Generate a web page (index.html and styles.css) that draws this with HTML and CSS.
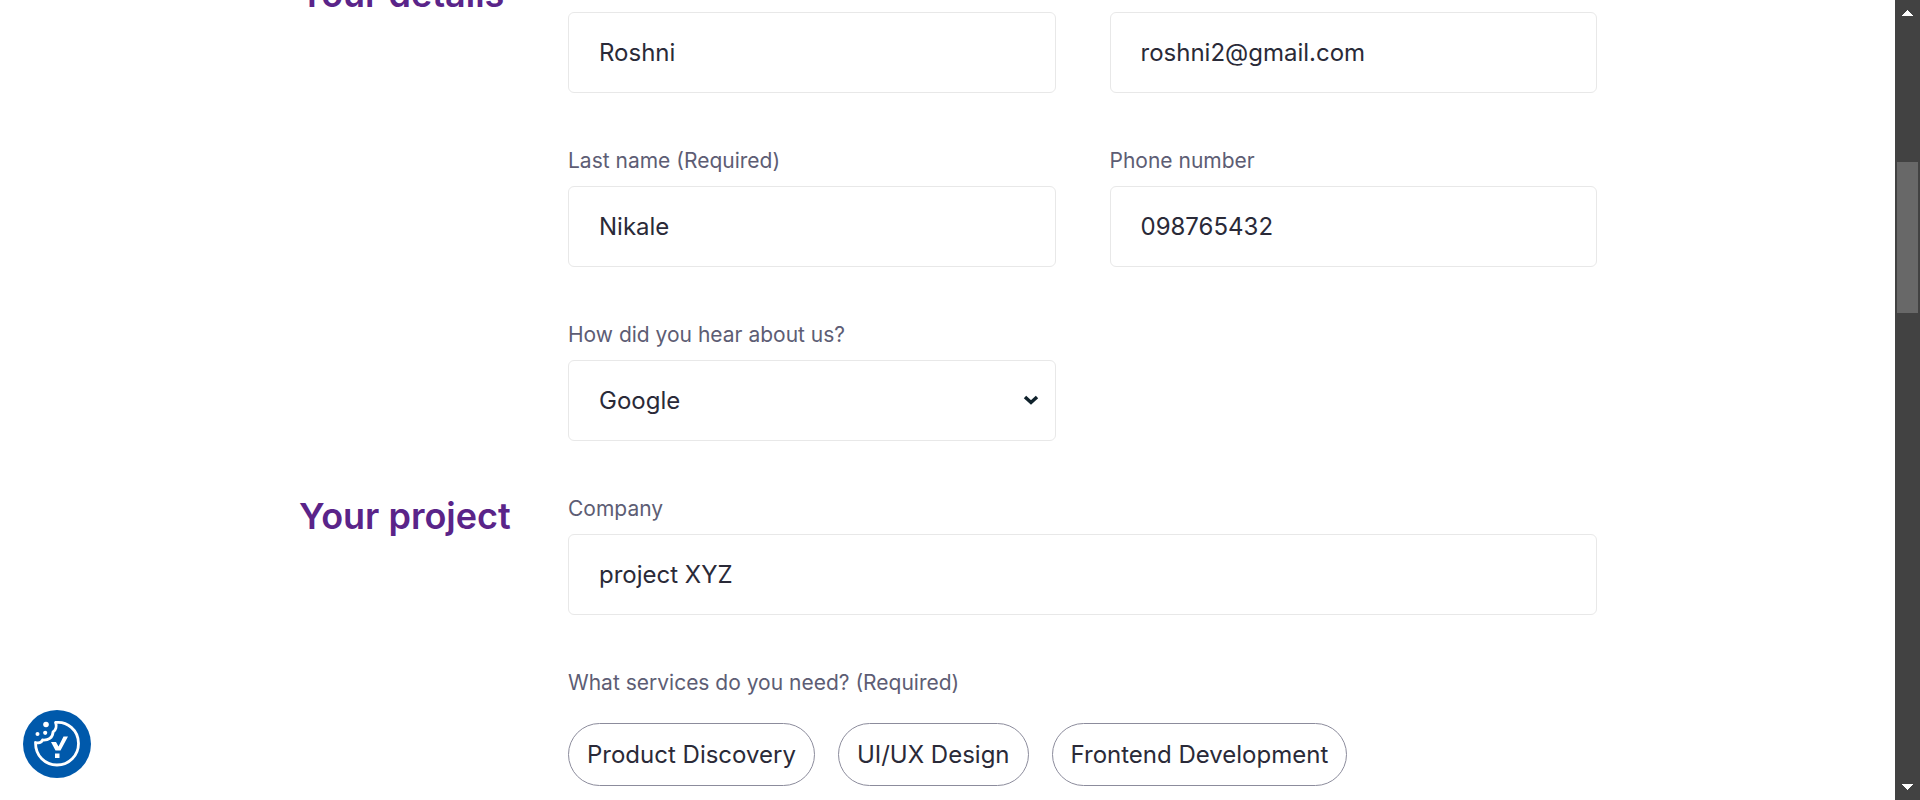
FILE: index.html
```html
<!DOCTYPE html>
<html lang="en">
<head>
<meta charset="utf-8">
<title>Your project</title>
<link rel="stylesheet" href="styles.css">
</head>
<body>
<div class="window">
  <main class="page">
    <form class="form">
      <section class="section">
        <h2 class="section-title">Your details</h2>
        <div class="fields">
          <div class="field">
            <label class="label" for="first">First name (Required)</label>
            <input class="control" id="first" type="text" value="Roshni">
          </div>
          <div class="field">
            <label class="label" for="email">Email (Required)</label>
            <input class="control" id="email" type="email" value="roshni2@gmail.com">
          </div>
          <div class="field">
            <label class="label" for="last">Last name (Required)</label>
            <input class="control" id="last" type="text" value="Nikale">
          </div>
          <div class="field">
            <label class="label" for="phone">Phone number</label>
            <input class="control" id="phone" type="tel" value="098765432">
          </div>
          <div class="field">
            <label class="label" for="source">How did you hear about us?</label>
            <div class="select-wrap">
              <select class="control" id="source"><option>Google</option></select>
              <svg class="chevron" viewBox="0 0 16 10" aria-hidden="true"><path d="M2 2l6 5.500 6-5.500"/></svg>
            </div>
          </div>
        </div>
      </section>
      <section class="section">
        <h2 class="section-title">Your project</h2>
        <div class="fields">
          <div class="field wide">
            <label class="label" for="company">Company</label>
            <input class="control" id="company" type="text" value="project XYZ">
          </div>
          <fieldset class="field wide services">
            <legend class="label">What services do you need? (Required)</legend>
            <div class="chips">
              <label class="chip"><input class="chip-input" type="checkbox">Product Discovery</label>
              <label class="chip"><input class="chip-input" type="checkbox">UI/UX Design</label>
              <label class="chip"><input class="chip-input" type="checkbox">Frontend Development</label>
            </div>
          </fieldset>
        </div>
      </section>
    </form>
  </main>
  <div class="scrollbar">
    <button class="scroll-button" type="button" aria-label="Scroll up"><svg class="arrow" viewBox="0 0 11 6" shape-rendering="crispEdges"><path d="M0 6L5.500 0 11 6z"/></svg></button>
    <div class="track"><div class="thumb"></div></div>
    <button class="scroll-button" type="button" aria-label="Scroll down"><svg class="arrow" viewBox="0 0 11 6" shape-rendering="crispEdges"><path d="M0 0h11L5.500 6z"/></svg></button>
  </div>
</div>
<button class="cookie" type="button" aria-label="Cookie settings">
  <svg class="cookie-icon" viewBox="0 0 68 68" aria-hidden="true">
    <circle cx="34" cy="34" r="34" fill="#0059ab"/>
    <path d="M32.500 12.500C44 11 55.500 20 55.500 33.500C55.500 45.500 46 55 34 55C22 55 12.500 46 12.500 32.500C16 33.500 18.500 32.500 19.500 30C25 30.500 30 28 30 22C33 20 34 16 32.500 12.500Z" fill="none" stroke="#fff" stroke-width="2.800" stroke-linejoin="round"/>
    <circle cx="23" cy="14.500" r="2.800" fill="#fff"/>
    <circle cx="14.500" cy="24" r="2" fill="#fff"/>
    <circle cx="22.200" cy="22.800" r="2.100" fill="#fff"/>
    <path d="M28 32h5l2.500 4.500L40.500 26.500h4.500L37.500 40.500h-5z" fill="#fff"/>
    <path d="M32 43.500h4.500v4.500h-4.500z" fill="#fff"/>
  </svg>
</button>
</body>
</html>
```
FILE: styles.css
```css
* {
  box-sizing: border-box;
}

body {
  margin: 0;
  background: #fff;
  color: #2a2a38;
  font-family: Inter, "Liberation Sans", sans-serif;
}

.window {
  display: flex;
  height: 100vh;
  overflow: hidden;
}

.page {
  flex: 1;
  min-width: 0;
  padding-left: 1px;
  overflow: hidden;
}

/* The form is shown scrolled past its first row of labels. */
.form {
  max-width: 1298px;
  margin: -27px auto 0;
}

.section {
  display: grid;
  grid-template-columns: 269px 1fr;
}

.section-title {
  margin: 0;
  color: #5a2489;
  font-size: 36px;
  font-weight: 600;
  line-height: 42px;
}

.fields {
  display: grid;
  grid-template-columns: 1fr 1fr;
  column-gap: 54px;
}

.field {
  display: flex;
  flex-direction: column;
  gap: 11px;
  min-width: 0;
  margin: 0 0 54px;
  padding: 0;
  border: 0;
}

.wide {
  grid-column: 1 / -1;
}

.label {
  padding: 0;
  color: #5d5d74;
  font-size: 21px;
  font-weight: 400;
  line-height: 28px;
}

.control {
  display: block;
  width: 100%;
  height: 81px;
  padding: 0 30px;
  border: 1px solid #e8e8e8;
  border-radius: 6px;
  background: #fff;
  color: inherit;
  font-family: inherit;
  font-size: 24px;
  font-weight: 400;
  appearance: none;
}

.select-wrap {
  position: relative;
}

.chevron {
  position: absolute;
  top: 35px;
  right: 17px;
  width: 16px;
  height: 10px;
  fill: none;
  stroke: #10222c;
  stroke-width: 3.5;
  pointer-events: none;
}

.services {
  display: block;
}

.chips {
  display: flex;
  flex-wrap: wrap;
  gap: 23px;
  padding-top: 26px;
}

.chip {
  padding: 0 18px;
  border: 1px solid #8c8c9c;
  border-radius: 32px;
  font-size: 24px;
  font-weight: 400;
  line-height: 61px;
}

.chip-input {
  position: absolute;
  opacity: 0;
  pointer-events: none;
}

.scrollbar {
  display: flex;
  flex-direction: column;
  width: 25px;
  background: #424242;
}

.scroll-button {
  display: flex;
  align-items: center;
  justify-content: center;
  height: 26px;
  padding: 0;
  border: 0;
  background: none;
}

.arrow {
  width: 11px;
  height: 6px;
  fill: #fff;
}

.track {
  flex: 1;
  padding: 136px 2px 0;
}

.thumb {
  height: 151px;
  background: #686868;
}

.cookie {
  position: fixed;
  bottom: 22px;
  left: 23px;
  width: 68px;
  height: 68px;
  padding: 0;
  border: 0;
  border-radius: 50%;
  background: none;
}

.cookie-icon {
  display: block;
  width: 100%;
}
```
